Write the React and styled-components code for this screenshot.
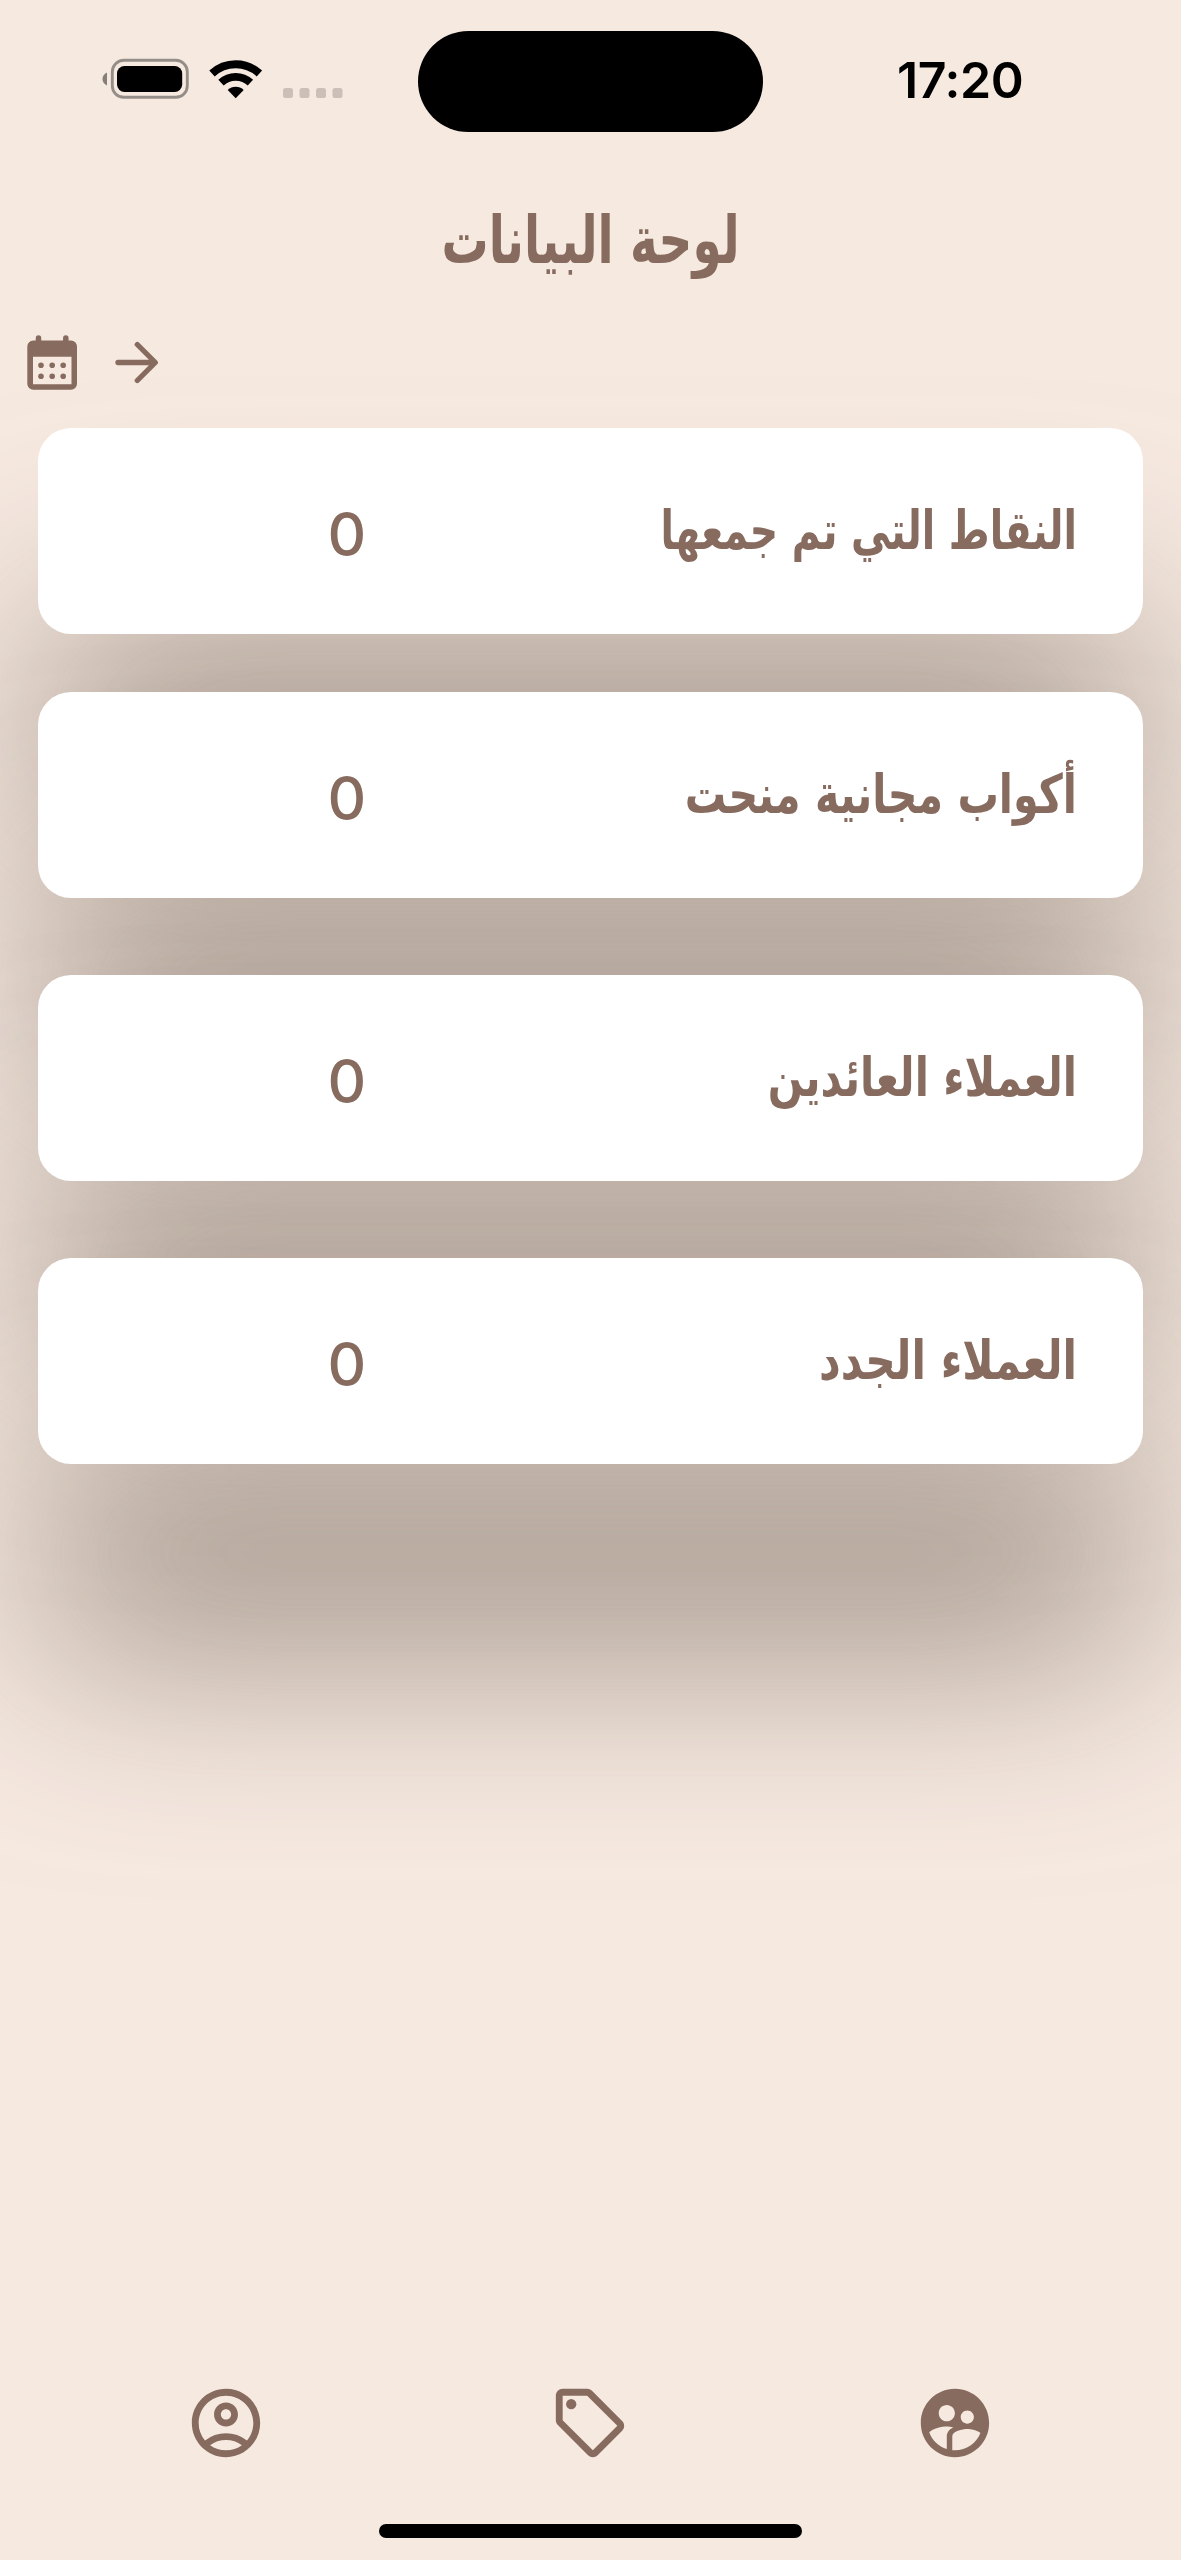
import React from "react";
import styled, { createGlobalStyle } from "styled-components";
import {
  MdOutlineAccountCircle,
  MdOutlineSell,
  MdSupervisedUserCircle
} from "react-icons/md";

const GlobalStyle = createGlobalStyle`
  * {
    box-sizing: border-box;
  }
  body {
    margin: 0;
    background: #f6e9e0;
  }
`;

const Screen = styled.div`
  width: 1181px;
  height: 2560px;
  display: flex;
  flex-direction: column;
  overflow: hidden;
  background: #f6e9e0;
  color: #876b5f;
  font-family: "DejaVu Sans", sans-serif;
`;

const StatusBar = styled.header`
  height: 132px;
  padding-top: 31px;
  display: grid;
  grid-template-columns: 418px 345px 1fr;
`;

const StatusIcons = styled.div`
  padding: 27px 0 0 102px;
`;

const Island = styled.div`
  height: 101px;
  border-radius: 51px;
  background: black;
`;

const Time = styled.div`
  padding: 19px 0 0 134px;
  color: black;
  font-family: Inter, sans-serif;
  font-size: 50px;
  line-height: 60px;
  font-weight: 600;
  letter-spacing: -0.4px;
`;

const Title = styled.h1`
  margin: 0;
  height: 198px;
  padding-top: 69px;
  text-align: center;
  font-size: 66px;
  line-height: 80px;
  font-weight: bold;
  transform: scaleX(0.712);
`;

const Toolbar = styled.div`
  height: 98px;
  padding: 4px 0 0 26px;
  display: flex;
  gap: 36px;
`;

const IconButton = styled.button`
  padding: 0;
  border: none;
  background: none;
  color: inherit;
  height: 58px;
`;

const Cards = styled.main`
  flex: 1;
  padding: 0 38.4px;
`;

const Card = styled.section`
  height: 206px;
  margin-bottom: ${props => props.$gap || 77}px;
  padding-right: 65.5px;
  display: flex;
  align-items: center;
  justify-content: space-between;
  border-radius: 33px;
  background: white;
  filter: drop-shadow(0 192px 102px rgba(124, 109, 98, 0.68));
`;

const Label = styled.div`
  width: 420px;
  padding-bottom: 1px;
  font-size: 54px;
  line-height: 64px;
  font-weight: bold;
  white-space: nowrap;
  transform: scaleX(${props => props.$stretch});
  transform-origin: right center;
`;

const Value = styled.div`
  width: 617px;
  flex-shrink: 0;
  text-align: center;
  font-family: Inter, sans-serif;
  font-size: 60px;
  line-height: 72px;
  font-weight: 500;
  padding-top: 5px;
`;

const TabBar = styled.nav`
  height: 178px;
  padding: 0 44px;
  display: grid;
  grid-template-columns: repeat(3, 1fr);
`;

const Tab = styled.a`
  display: flex;
  justify-content: center;
  color: inherit;
  svg {
    width: 82px;
    height: 82px;
  }
`;

const HomeIndicator = styled.div`
  width: 423px;
  height: 14px;
  margin: -36px auto 22px;
  flex-shrink: 0;
  border-radius: 7px;
  background: black;
`;

const stats = [
  { label: "النقاط التي تم جمعها", value: 0, stretch: 0.728, gap: 58 },
  { label: "أكواب مجانية منحت", value: 0, stretch: 0.764 },
  { label: "العملاء العائدين", value: 0, stretch: 0.768 },
  { label: "العملاء الجدد", value: 0, stretch: 0.783 }
];

function Signals() {
  return (
    <svg width="242" height="42" viewBox="102 58 242 42" display="block">
      <path d="M107 72.5v13c-6-2.800-6-10.200 0-13z" fill="#857e79" />
      <rect
        x="112.300"
        y="60.300"
        width="75"
        height="37"
        rx="11.500"
        fill="none"
        stroke="#958e88"
        strokeWidth="2.900"
      />
      <rect x="117" y="66" width="65.200" height="26" rx="7.500" />
      {/* wifi arcs */}
      <g fill="none" stroke="black">
        <path d="M212 73.500a35 35 0 0 1 47.400 0" strokeWidth="8" />
        <path d="M221 82.700a21.500 21.500 0 0 1 29.400 0" strokeWidth="7.800" />
      </g>
      <path d="M235.700 98.200l-8-8.200a11.600 11.600 0 0 1 16 0z" />
      {[283, 299.5, 316, 332.5].map(x => (
        <rect key={x} x={x} y="88" width="10" height="10" rx="2.500" fill="#cbbfb7" />
      ))}
    </svg>
  );
}

function CalendarIcon() {
  return (
    <svg width="52" height="58" viewBox="26 334 52 58" display="block">
      <path
        fill="currentColor"
        fillRule="evenodd"
        d="M33.300 340.500h37.700a6 6 0 0 1 6 6v37.300a6 6 0 0 1-6 6h-37.700a6 6 0 0 1-6-6v-37.300a6 6 0 0 1 6-6zM33 356.700v27.600h38.500v-27.600z"
      />
      <path
        d="M38.500 338v6M65.800 338v6"
        stroke="currentColor"
        strokeWidth="5.500"
        strokeLinecap="round"
      />
      {[365.2, 376.3].map(y =>
        [41, 52.2, 63.2].map(x => (
          <circle key={`${x}-${y}`} cx={x} cy={y} r="2.800" fill="currentColor" />
        ))
      )}
    </svg>
  );
}

function ArrowIcon() {
  return (
    <svg width="46" height="58" viewBox="114 334 46 58" display="block">
      <path
        d="M118 362.500h37M137.300 344.500l18 18-18 18"
        fill="none"
        stroke="currentColor"
        strokeWidth="5.300"
        strokeLinecap="round"
        strokeLinejoin="round"
      />
    </svg>
  );
}

function App() {
  return (
    <Screen>
      <GlobalStyle />
      <StatusBar>
        <StatusIcons>
          <Signals />
        </StatusIcons>
        <Island />
        <Time>17:20</Time>
      </StatusBar>
      <Title dir="rtl">لوحة البيانات</Title>
      <Toolbar>
        <IconButton>
          <CalendarIcon />
        </IconButton>
        <IconButton>
          <ArrowIcon />
        </IconButton>
      </Toolbar>
      <Cards>
        {stats.map(({ label, value, stretch, gap }) => (
          <Card key={label} $gap={gap}>
            <Value>{value}</Value>
            <Label dir="rtl" $stretch={stretch}>
              {label}
            </Label>
          </Card>
        ))}
      </Cards>
      <TabBar>
        <Tab>
          <MdOutlineAccountCircle />
        </Tab>
        <Tab>
          <MdOutlineSell />
        </Tab>
        <Tab>
          <MdSupervisedUserCircle />
        </Tab>
      </TabBar>
      <HomeIndicator />
    </Screen>
  );
}

export default App;
